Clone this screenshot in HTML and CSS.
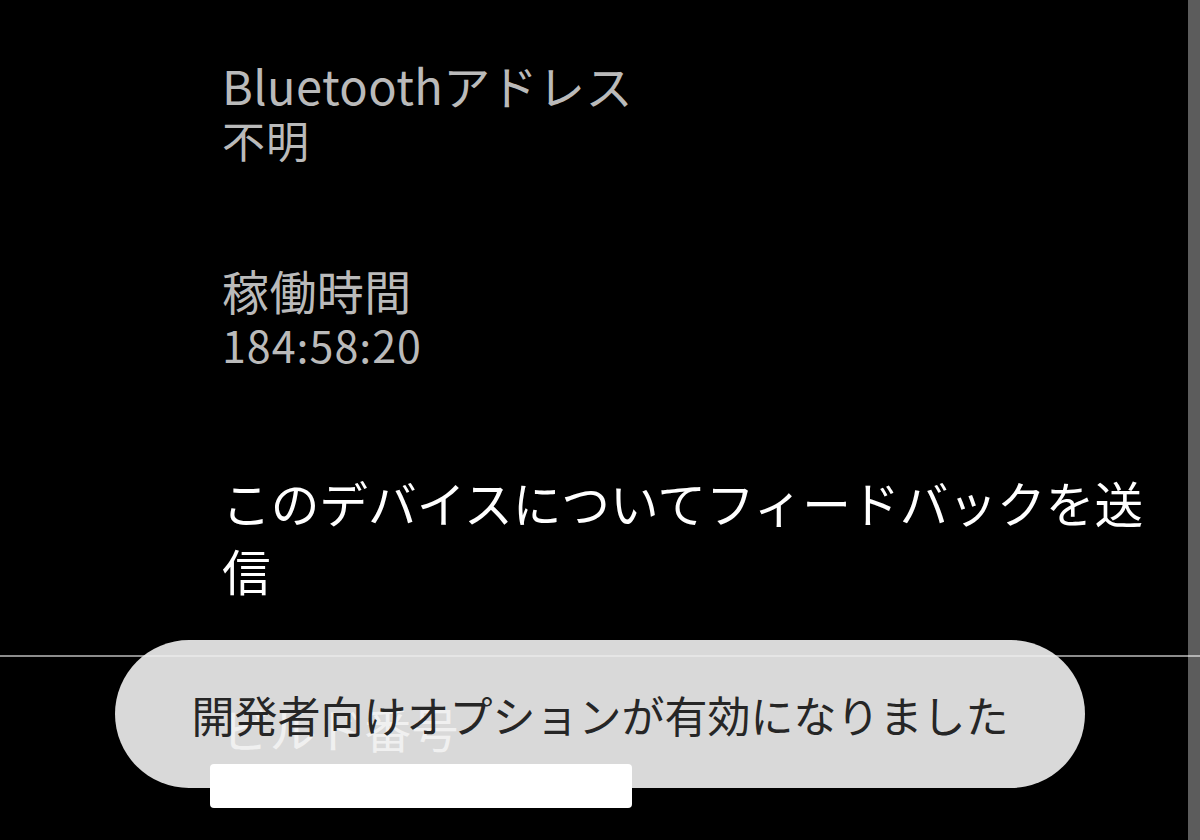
FILE: index.html
```html
<!DOCTYPE html>
<html lang="ja">
<head>
<meta charset="utf-8">
<title>デバイス情報</title>
<link rel="stylesheet" href="styles.css">
</head>
<body>
<div class="screen">
  <div class="list">
    <div class="item disabled">
      <div class="title">Bluetoothアドレス</div>
      <div class="value">不明</div>
    </div>
    <div class="item disabled">
      <div class="title">稼働時間</div>
      <div class="value">184:58:20</div>
    </div>
    <div class="item feedback">
      <div class="title wrap">このデバイスについてフィードバックを送信</div>
    </div>
    <div class="divider"></div>
    <div class="item build">
      <div class="title">ビルド番号</div>
      <div class="value"><div class="redact"></div></div>
    </div>
  </div>
  <div class="scrollbar"></div>
  <div class="toast">開発者向けオプションが有効になりました</div>
</div>
</body>
</html>
```
FILE: styles.css
```css
html, body {
  margin: 0;
  padding: 0;
  background: #000;
}
body {
  font-family: "Noto Sans CJK JP", "Noto Sans", sans-serif;
  overflow: hidden;
}
.screen {
  position: relative;
  width: 1200px;
  height: 840px;
  overflow: hidden;
  background: #000;
}
.list {
  padding-top: 9px;
  display: flex;
  flex-direction: column;
}
.item {
  padding: 49px 0 48px 222px;
  color: #fff;
}
.item.disabled {
  color: #bababa;
}
.title {
  font-size: 47px;
  line-height: 54px;
  letter-spacing: 0.4px;
}
.title.wrap {
  width: 950px;
  font-size: 48.7px;
  line-height: 68px;
  letter-spacing: 0;
}
.value {
  font-size: 43px;
  line-height: 54px;
  letter-spacing: 1px;
}
.feedback {
  padding-bottom: 51px;
}
.divider {
  position: relative;
  z-index: 2;
  height: 2px;
  background: rgba(255, 255, 255, 0.55);
}
.build {
  padding-top: 44px;
  padding-bottom: 0;
}
.build .value {
  padding-top: 9px;
}
.redact {
  position: relative;
  z-index: 3;
  width: 422px;
  height: 44px;
  margin-left: -12px;
  background: #fff;
  border-radius: 4px;
}
.scrollbar {
  position: absolute;
  top: 0;
  right: 0;
  width: 12px;
  height: 840px;
  background: #5c5c5c;
  z-index: 1;
}
.toast {
  position: absolute;
  left: 115px;
  top: 640px;
  width: 970px;
  height: 148px;
  border-radius: 74px;
  background: rgba(238, 238, 238, 0.91);
  color: #262626;
  font-size: 43px;
  display: flex;
  align-items: center;
  justify-content: center;
  z-index: 2;
}
```
